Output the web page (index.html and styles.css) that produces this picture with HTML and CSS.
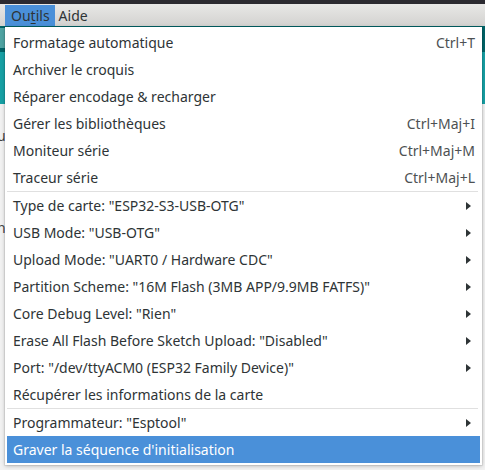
FILE: index.html
```html
<!DOCTYPE html>
<html>
<head>
<meta charset="utf-8">
<link rel="stylesheet" href="styles.css">
</head>
<body>
<div class="app">
  <div class="titlebar"></div>
  <div class="menubar">
    <span class="mb-item active">Ou<u>t</u>ils</span>
    <span class="mb-item">Aide</span>
  </div>
  <div class="toolbar"><div class="tb-btn"></div></div>
  <div class="tabs"></div>
  <div class="editor">
    <div class="code-line l1">u</div>
    <div class="code-line l2">n</div>
  </div>

  <div class="menu">
    <div class="item"><span class="label">Formatage automatique</span><span class="accel">Ctrl+T</span></div>
    <div class="item"><span class="label">Archiver le croquis</span></div>
    <div class="item"><span class="label">Réparer encodage &amp; recharger</span></div>
    <div class="item"><span class="label">Gérer les bibliothèques</span><span class="accel">Ctrl+Maj+I</span></div>
    <div class="item"><span class="label">Moniteur série</span><span class="accel">Ctrl+Maj+M</span></div>
    <div class="item"><span class="label">Traceur série</span><span class="accel">Ctrl+Maj+L</span></div>
    <div class="sep"></div>
    <div class="item sub"><span class="label">Type de carte: "ESP32-S3-USB-OTG"</span><span class="arrow"></span></div>
    <div class="item sub"><span class="label">USB Mode: "USB-OTG"</span><span class="arrow"></span></div>
    <div class="item sub"><span class="label">Upload Mode: "UART0 / Hardware CDC"</span><span class="arrow"></span></div>
    <div class="item sub"><span class="label">Partition Scheme: "16M Flash (3MB APP/9.9MB FATFS)"</span><span class="arrow"></span></div>
    <div class="item sub"><span class="label">Core Debug Level: "Rien"</span><span class="arrow"></span></div>
    <div class="item sub"><span class="label">Erase All Flash Before Sketch Upload: "Disabled"</span><span class="arrow"></span></div>
    <div class="item sub"><span class="label">Port: "/dev/ttyACM0 (ESP32 Family Device)"</span><span class="arrow"></span></div>
    <div class="item"><span class="label">Récupérer les informations de la carte</span></div>
    <div class="sep"></div>
    <div class="item sub"><span class="label">Programmateur: "Esptool"</span><span class="arrow"></span></div>
    <div class="item hl"><span class="label">Graver la séquence d'initialisation</span></div>
  </div>
</div>
</body>
</html>
```
FILE: styles.css
```css
html, body {
  margin: 0;
  padding: 0;
}
body {
  width: 485px;
  height: 470px;
  overflow: hidden;
  font-family: "Noto Sans", "Open Sans", sans-serif;
  font-size: 14px;
  color: #2e3436;
  background: #eeeeec;
}
.app {
  position: relative;
  width: 485px;
  height: 470px;
  display: flex;
  flex-direction: column;
}
.titlebar {
  height: 4px;
  background: #2b2a30;
}
.menubar {
  height: 22px;
  display: flex;
  align-items: stretch;
  padding-left: 5px;
  background: linear-gradient(#e8e8e6, #d3d2d0);
}
.mb-item {
  display: flex;
  align-items: center;
  padding: 0 4px;
  line-height: 20px;
  margin-top: 1px;
  color: #2e3436;
}
.mb-item.active {
  background: #4a90d9;
  padding: 0 5px 0 6px;
}
.mb-item u {
  text-decoration-thickness: 1px;
  text-underline-offset: 2px;
}
.toolbar {
  height: 26px;
  background: #006468;
}
.tb-btn {
  width: 40px;
  height: 20px;
  margin: 2px 0 0 -20px;
  background: #4fa4a3;
}
.tabs {
  height: 52px;
  background: #17a1a5;
}
.editor {
  flex: 1;
  background: #f2f2f2;
  position: relative;
  font-size: 14px;
  color: #444;
}
.code-line {
  position: absolute;
  left: -3px;
}
.l1 { top: 22px; }
.l2 { top: 114px; }

.menu {
  position: absolute;
  left: 5px;
  top: 27px;
  width: 473px;
  padding: 2px 2px 2px 2px;
  background: #ffffff;
  box-shadow: 0 1px 4px rgba(0,0,0,0.25), 0 0 0 1px rgba(0,0,0,0.06);
  display: flex;
  flex-direction: column;
}
.item {
  height: 27px;
  display: flex;
  align-items: center;
  justify-content: space-between;
  padding: 0 5px 0 6px;
  white-space: nowrap;
}
.accel {
  color: #4d5153;
}
.item.sub {
  padding-right: 9px;
}
.arrow {
  width: 0;
  height: 0;
  border-top: 4px solid transparent;
  border-bottom: 4px solid transparent;
  border-left: 5px solid #2e3436;
}
.item.hl {
  background: #4a90d9;
  color: #ffffff;
}
.sep {
  height: 1px;
  background: #e0e0e0;
  margin: 0 2px 0 0;
}
```
